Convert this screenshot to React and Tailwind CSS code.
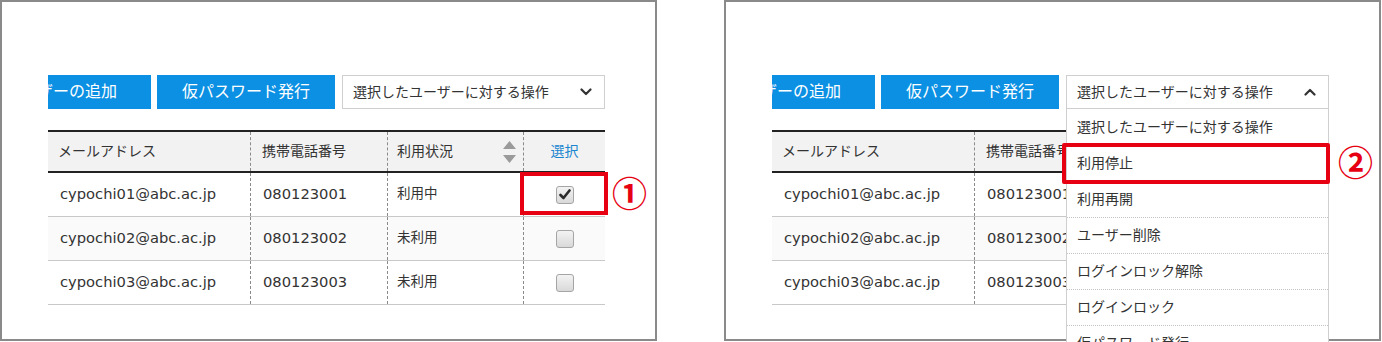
import React from "react";

const JP = "font-['DejaVu_Sans','Noto_Sans_CJK_JP',sans-serif]";

function Chevron({ up }) {
  return (
    <svg width="12" height="8" viewBox="0 0 12 8" className="shrink-0">
      <polyline
        points={up ? "1.5,6.5 6,2 10.5,6.5" : "1.5,1.5 6,6 10.5,1.5"}
        fill="none"
        stroke="#333"
        strokeWidth="2.2"
        strokeLinecap="round"
        strokeLinejoin="round"
      />
    </svg>
  );
}

function SortArrows() {
  return (
    <svg width="13" height="22" viewBox="0 0 13 22" className="shrink-0">
      <polygon points="6.5,0 13,8 0,8" fill="#9a9a9a" />
      <polygon points="0,14 13,14 6.5,22" fill="#9a9a9a" />
    </svg>
  );
}

function Checkbox({ checked }) {
  return (
    <div className="w-[18px] h-[18px] rounded-[3px] border border-[#a5a5a5] bg-gradient-to-b from-[#f3f3f3] to-[#d9d9d9] flex items-center justify-center">
      {checked && (
        <svg width="12" height="11" viewBox="0 0 12 11">
          <path d="M1.5 6 L4.5 9 L10.5 1.5" fill="none" stroke="#2b2b2b" strokeWidth="2.6" strokeLinecap="round" strokeLinejoin="round" />
        </svg>
      )}
    </div>
  );
}

const rows = [
  { email: "cypochi01@abc.ac.jp", phone: "080123001", status: "利用中", checked: true, bg: "bg-white" },
  { email: "cypochi02@abc.ac.jp", phone: "080123002", status: "未利用", checked: false, bg: "bg-[#fafafa]" },
  { email: "cypochi03@abc.ac.jp", phone: "080123003", status: "未利用", checked: false, bg: "bg-white" },
];

const menuItems = [
  "選択したユーザーに対する操作",
  "利用停止",
  "利用再開",
  "ユーザー削除",
  "ログインロック解除",
  "ログインロック",
  "仮パスワード発行",
];

function Panel({ open }) {
  return (
    <div className={`relative w-[657px] h-[341px] shrink-0 border-2 border-[#8a8a8a] bg-white ${JP}`}>
      <div className="pl-[46px] pt-[73px] w-[603px]">
        {/* toolbar */}
        <div className="flex h-[34px]">
          <div className="w-[103px] h-[34px] overflow-hidden bg-[#0b90e3] flex justify-end items-center pr-[34px] text-white text-[16px] whitespace-nowrap">
            ユーザーの追加
          </div>
          <div className="ml-[6px] w-[178px] h-[34px] bg-[#0b90e3] flex justify-center items-center text-white text-[16px] whitespace-nowrap">
            仮パスワード発行
          </div>
          <div className="ml-[7px] w-[263px] h-[34px] border border-[#cfcfcf] bg-white flex items-center justify-between pl-[10px] pr-[12px] text-[14px] text-[#333]">
            <span>選択したユーザーに対する操作</span>
            <Chevron up={open} />
          </div>
        </div>

        {/* table */}
        <div className="mt-[21px] w-[557px]">
          <div className="grid grid-cols-[202px_137px_136px_82px] h-[43px] border-t-2 border-b-2 border-[#222] bg-[#f2f2f2] text-[14px] text-[#333]">
            <div className="flex items-center pl-[10px]">メールアドレス</div>
            <div className="flex items-center pl-[11px] border-l border-dashed border-[#8a8a8a]">携帯電話番号</div>
            <div className="flex items-center justify-between pl-[9px] pr-[7px] border-l border-dashed border-[#8a8a8a]">
              <span>利用状況</span>
              <SortArrows />
            </div>
            <div className="flex items-center justify-center border-l border-dashed border-[#8a8a8a] text-[#1a86d0]">選択</div>
          </div>
          {rows.map((r) => (
            <div key={r.email} className={`grid grid-cols-[202px_137px_136px_82px] h-[44px] border-b border-[#c8c8c8] ${r.bg} text-[#333]`}>
              <div className="flex items-center pl-[12px] text-[14.7px]">{r.email}</div>
              <div className="flex items-center pl-[12px] text-[14.7px] border-l border-dashed border-[#8a8a8a]">{r.phone}</div>
              <div className="flex items-center pl-[9px] text-[13.5px] border-l border-dashed border-[#8a8a8a] pb-[2px]">{r.status}</div>
              <div className="flex items-center justify-center border-l border-dashed border-[#8a8a8a]">
                <Checkbox checked={r.checked} />
              </div>
            </div>
          ))}
        </div>
      </div>

      {!open && (
        <>
          <div className="absolute left-[518px] top-[170px] w-[88px] h-[43px] border-4 border-[#e60012]" />
          <div className="absolute left-[610px] top-[172px] text-[35px] leading-none font-bold text-[#e60012] font-['Noto_Sans_CJK_JP',sans-serif]">①</div>
        </>
      )}

      {open && (
        <>
          <div className="absolute left-[340px] top-[107px] w-[263px] z-10 bg-white border-x border-[#cfcfcf] text-[14px] text-[#333]">
            {menuItems.map((m, i) => (
              <div
                key={m}
                className={`h-[36px] flex items-center pl-[10px] whitespace-nowrap ${i > 0 ? "border-t border-dotted border-[#c4c4c4]" : ""}`}
              >
                {m}
              </div>
            ))}
          </div>
          <div className="absolute left-[336px] top-[141px] w-[268px] h-[41px] z-20 border-4 border-[#e60012] rounded-[2px]" />
          <div className="absolute left-[612px] top-[141px] z-20 text-[35px] leading-none font-bold text-[#e60012] font-['Noto_Sans_CJK_JP',sans-serif]">②</div>
        </>
      )}
    </div>
  );
}

export default function App() {
  return (
    <div className="w-[1382px] h-[342px] overflow-hidden bg-white flex gap-[67px]">
      <Panel open={false} />
      <Panel open={true} />
    </div>
  );
}
